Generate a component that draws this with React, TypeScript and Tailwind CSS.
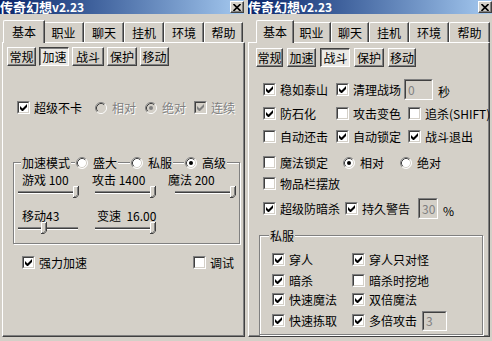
import React from "react";

type Kids = { children?: React.ReactNode };

function CheckBox({ checked, disabled }: { checked?: boolean; disabled?: boolean }) {
  return (
    <span className="relative block w-[13px] h-[13px] shrink-0 border border-t-[#808080] border-l-[#808080] border-r-white border-b-white">
      <span
        className={`absolute inset-0 border border-t-[#404040] border-l-[#404040] border-r-[#d4d0c8] border-b-[#d4d0c8] ${
          disabled ? "bg-[#d4d0c8]" : "bg-white"
        }`}
      />
      {checked && (
        <svg className="absolute left-[2px] top-[2px]" width="7" height="7" viewBox="0 0 7 7">
          <path d="M0 2L0 5L2 7L3 7L7 3L7 0L2.5 4.5Z" fill={disabled ? "#808080" : "#000"} />
        </svg>
      )}
    </span>
  );
}

function RadioBox({ checked, disabled }: { checked?: boolean; disabled?: boolean }) {
  return (
    <svg width="12" height="12" viewBox="0 0 12 12" className="block shrink-0">
      <circle cx="6" cy="6" r="5.2" fill={disabled ? "#d4d0c8" : "#fff"} />
      <path d="M2.11 9.89A5.5 5.5 0 0 1 9.89 2.11" stroke="#808080" fill="none" />
      <path d="M2.82 9.18A4.5 4.5 0 0 1 9.18 2.82" stroke="#404040" fill="none" />
      <path d="M9.89 2.11A5.5 5.5 0 0 1 2.11 9.89" stroke="#fff" fill="none" />
      <path d="M9.18 2.82A4.5 4.5 0 0 1 2.82 9.18" stroke="#d4d0c8" fill="none" />
      {checked && <circle cx="6" cy="6" r="2" fill={disabled ? "#808080" : "#000"} />}
    </svg>
  );
}

function Label({ children, disabled }: Kids & { disabled?: boolean }) {
  return (
    <span
      className={`text-[12px] leading-[13px] whitespace-nowrap ${
        disabled ? "text-[#808080] [text-shadow:1px_1px_0_#fff]" : "text-black"
      }`}
    >
      {children}
    </span>
  );
}

function CheckItem({
  label,
  checked,
  disabled,
  className = "",
}: {
  label: string;
  checked?: boolean;
  disabled?: boolean;
  className?: string;
}) {
  return (
    <div className={`flex items-center gap-[4px] shrink-0 ${className}`}>
      <CheckBox checked={checked} disabled={disabled} />
      <Label disabled={disabled}>{label}</Label>
    </div>
  );
}

function RadioItem({
  label,
  checked,
  disabled,
  className = "",
}: {
  label: string;
  checked?: boolean;
  disabled?: boolean;
  className?: string;
}) {
  return (
    <div className={`flex items-center gap-[5px] shrink-0 ${className}`}>
      <RadioBox checked={checked} disabled={disabled} />
      <Label disabled={disabled}>{label}</Label>
    </div>
  );
}

function Btn({ c, pressed, children }: Kids & { c: string; pressed?: boolean }) {
  return pressed ? (
    <div
      className={`h-[19px] ${c} flex items-center justify-center pt-[1px] pl-[1px] bg-[#eceae6] border border-t-[#404040] border-l-[#404040] border-r-white border-b-white shadow-[inset_1px_1px_0_#808080] text-[12px] leading-[12px]`}
    >
      {children}
    </div>
  ) : (
    <div
      className={`h-[19px] ${c} flex items-center justify-center bg-[#d4d0c8] border border-t-white border-l-white border-r-[#404040] border-b-[#404040] shadow-[inset_-1px_-1px_0_#808080] text-[12px] leading-[12px]`}
    >
      {children}
    </div>
  );
}

function Field({ value, c }: { value: string; c: string }) {
  return (
    <div className={`shrink-0 border border-t-[#808080] border-l-[#808080] border-r-white border-b-white ${c}`}>
      <div className="h-full flex items-center border border-t-[#404040] border-l-[#404040] border-r-[#d4d0c8] border-b-[#d4d0c8] bg-[#d4d0c8] text-[#808080] text-[12px] leading-[12px] pl-[2px]">
        {value}
      </div>
    </div>
  );
}

function Slider({ c, value, max }: { c: string; value: number; max: number }) {
  const trackW = 60;
  const left = Math.round((value / max) * (trackW - 4)) - 1;
  return (
    <div className={`relative h-[12px] shrink-0 ${c}`}>
      <div className="absolute left-0 right-0 top-[5px] h-[3px] border-t border-t-[#808080] border-b border-b-white bg-[#404040]" />
      <svg className="absolute top-0" style={{ left }} width="6" height="12" viewBox="0 0 6 12">
        <path d="M0 0H6V9L3 12H0Z" fill="#d4d0c8" />
        <path d="M0.5 11V0.5H5" stroke="#fff" fill="none" />
        <path d="M5.5 0V9.2L3 11.5H0" stroke="#404040" fill="none" />
        <path d="M4.5 1V8.8L2.6 10.5H1" stroke="#808080" fill="none" />
      </svg>
    </div>
  );
}

function Group({ c, legend, children }: Kids & { c: string; legend: React.ReactNode }) {
  return (
    <div className={`relative shrink-0 border border-[#808080] shadow-[inset_1px_1px_0_#fff,1px_1px_0_#fff] ${c}`}>
      <div className="absolute -top-[7px] left-[7px] h-[13px] flex items-center">{legend}</div>
      {children}
    </div>
  );
}

type TabDef = { label: string; c: string; selected?: boolean };

function Tab({ t }: { t: TabDef }) {
  if (t.selected) {
    return (
      <div
        className={`relative z-10 -mx-[2px] h-[23px] ${t.c} shrink-0 bg-[#d4d0c8] border-t border-l border-t-white border-l-white border-r border-r-[#404040] shadow-[inset_-1px_0_0_#808080] rounded-tl-[2px] flex items-center justify-center pb-[1px] text-[12px] leading-[12px]`}
      >
        {t.label}
      </div>
    );
  }
  return (
    <div
      className={`mt-[2px] h-[20px] ${t.c} shrink-0 bg-[#d4d0c8] border-t border-l border-t-white border-l-white border-r border-r-[#404040] shadow-[inset_-1px_0_0_#808080] rounded-tl-[2px] flex items-center justify-center text-[12px] leading-[12px]`}
    >
      {t.label}
    </div>
  );
}

function CloseBtn() {
  return (
    <div className="w-[14px] h-[12px] shrink-0 bg-[#d4d0c8] border border-t-white border-l-white border-r-[#404040] border-b-[#404040] shadow-[inset_-1px_-1px_0_#808080] flex items-center justify-center">
      <svg width="8" height="7" viewBox="0 0 8 7">
        <path d="M0.5 0L7.5 7M7.5 0L0.5 7" stroke="#000" strokeWidth="1.6" />
      </svg>
    </div>
  );
}

function Window({
  c,
  titleC,
  tabRowC,
  tabs,
  children,
}: Kids & { c: string; titleC: string; tabRowC: string; tabs: TabDef[] }) {
  return (
    <div className={`flex flex-col h-[341px] shrink-0 bg-[#d4d0c8] ${c}`}>
      <div
        className={`h-[14px] flex items-center justify-between bg-linear-to-r from-[#0a246a] to-[#a6caf0] ${titleC}`}
      >
        <span className="flex items-baseline text-white font-bold whitespace-nowrap">
          <span className="text-[13px] leading-[14px]">传奇幻想</span>
          <span className="text-[12px] leading-[14px]">v2.23</span>
        </span>
        <CloseBtn />
      </div>
      <div className="flex flex-col pt-[6px]">
        <div className={`flex h-[22px] ${tabRowC}`}>
          {tabs.map((t) => (
            <Tab key={t.label} t={t} />
          ))}
        </div>
        <div className="h-[295px] flex flex-col border-t border-l border-t-white border-l-white border-r border-b border-r-[#404040] border-b-[#404040] shadow-[inset_-1px_-1px_0_#808080]">
          {children}
        </div>
      </div>
    </div>
  );
}

const leftTabs: TabDef[] = [
  { label: "基本", c: "w-[42px]", selected: true },
  { label: "职业", c: "w-[41px]" },
  { label: "聊天", c: "w-[40px]" },
  { label: "挂机", c: "w-[40px]" },
  { label: "环境", c: "w-[40px]" },
  { label: "帮助", c: "w-[39px]" },
];

const rightTabs: TabDef[] = [
  { label: "基本", c: "w-[38px]", selected: true },
  { label: "职业", c: "w-[39px]" },
  { label: "聊天", c: "w-[38px]" },
  { label: "挂机", c: "w-[40px]" },
  { label: "环境", c: "w-[40px]" },
  { label: "帮助", c: "w-[41px]" },
];

function LeftContent() {
  return (
    <div className="flex flex-col">
      <div className="flex gap-[3px] mt-[4px] ml-[4px]">
        <Btn c="w-[29px]">常规</Btn>
        <Btn c="w-[30px]" pressed>
          加速
        </Btn>
        <Btn c="w-[32px]">战斗</Btn>
        <Btn c="w-[30px]">保护</Btn>
        <Btn c="w-[29px]">移动</Btn>
      </div>
      <div className="flex h-[13px] items-center mt-[35px] pl-[14px]">
        <CheckItem className="w-[78px]" checked label="超级不卡" />
        <RadioItem className="w-[50px]" disabled label="相对" />
        <RadioItem className="w-[49px]" disabled checked label="绝对" />
        <CheckItem disabled checked label="连续" />
      </div>
      <Group
        c="mt-[48px] ml-[10px] w-[227px] h-[82px]"
        legend={
          <>
            <span className="bg-[#d4d0c8] px-[1px] h-[13px] flex items-center">
              <Label>加速模式</Label>
            </span>
            <RadioItem className="bg-[#d4d0c8] ml-[4px] px-[1px] h-[13px]" label="盛大" />
            <RadioItem className="bg-[#d4d0c8] ml-[12px] px-[1px] h-[13px]" label="私服" />
            <RadioItem className="bg-[#d4d0c8] ml-[11px] px-[1px] h-[13px]" checked label="高级" />
          </>
        }
      >
        <div className="flex flex-col">
          <div className="flex h-[12px] items-center mt-[11px] pl-[8px] text-[12px] leading-[12px] whitespace-nowrap">
            <span className="w-[70px] shrink-0">游戏 100</span>
            <span className="w-[76px] shrink-0">攻击 1400</span>
            <span>魔法 200</span>
          </div>
          <div className="flex items-center pl-[4px]">
            <Slider c="w-[60px]" value={100} max={100} />
            <Slider c="w-[60px] ml-[17px]" value={1400} max={1400} />
            <Slider c="w-[60px] ml-[20px]" value={200} max={200} />
          </div>
          <div className="flex h-[12px] items-center mt-[12px] pl-[8px] text-[12px] leading-[12px] whitespace-nowrap">
            <span className="w-[75px] shrink-0">移动43</span>
            <span>变速&nbsp; 16.00</span>
          </div>
          <div className="flex items-center pl-[4px]">
            <Slider c="w-[60px]" value={43} max={100} />
            <Slider c="w-[60px] ml-[17px]" value={16} max={16} />
          </div>
        </div>
      </Group>
      <div className="flex h-[13px] items-center mt-[12px] pl-[19px]">
        <CheckItem className="w-[171px]" checked label="强力加速" />
        <CheckItem label="调试" />
      </div>
    </div>
  );
}

function RightContent() {
  return (
    <div className="flex flex-col">
      <div className="flex gap-[4px] mt-[5px] ml-[7px]">
        <Btn c="w-[27px]">常规</Btn>
        <Btn c="w-[29px]">加速</Btn>
        <Btn c="w-[30px]" pressed>
          战斗
        </Btn>
        <Btn c="w-[30px]">保护</Btn>
        <Btn c="w-[28px]">移动</Btn>
      </div>
      <div className="flex h-[13px] items-center mt-[16px] pl-[14px]">
        <CheckItem className="w-[73px]" checked label="稳如泰山" />
        <CheckItem className="w-[68px]" checked label="清理战场" />
        <Field c="w-[29px] h-[21px]" value="0" />
        <span className="ml-[5px]">
          <Label>秒</Label>
        </span>
      </div>
      <div className="flex h-[13px] items-center mt-[11px] pl-[14px]">
        <CheckItem className="w-[73px]" checked label="防石化" />
        <CheckItem className="w-[72px]" label="攻击变色" />
        <CheckItem label="追杀(SHIFT)" />
      </div>
      <div className="flex h-[13px] items-center mt-[10px] pl-[14px]">
        <CheckItem className="w-[73px]" label="自动还击" />
        <CheckItem className="w-[72px]" checked label="自动锁定" />
        <CheckItem checked label="战斗退出" />
      </div>
      <div className="flex h-[13px] items-center mt-[13px] pl-[14px]">
        <CheckItem className="w-[80px]" label="魔法锁定" />
        <RadioItem className="w-[57px]" checked label="相对" />
        <RadioItem label="绝对" />
      </div>
      <div className="flex h-[13px] items-center mt-[8px] pl-[14px]">
        <CheckItem label="物品栏摆放" />
      </div>
      <div className="flex h-[13px] items-center mt-[12px] pl-[14px]">
        <CheckItem className="w-[82px]" checked label="超级防暗杀" />
        <CheckItem className="w-[73px]" checked label="持久警告" />
        <Field c="w-[20px] h-[21px]" value="30" />
        <span className="ml-[5px]">
          <Label>%</Label>
        </span>
      </div>
      <Group
        c="mt-[20px] ml-[10px] w-[224px] h-[100px]"
        legend={
          <span className="bg-[#d4d0c8] ml-[2px] px-[1px] h-[13px] flex items-center">
            <Label>私服</Label>
          </span>
        }
      >
        <div className="flex flex-col pl-[12px]">
          <div className="flex h-[13px] items-center mt-[17px]">
            <CheckItem className="w-[80px]" checked label="穿人" />
            <CheckItem checked label="穿人只对怪" />
          </div>
          <div className="flex h-[13px] items-center mt-[8px]">
            <CheckItem className="w-[80px]" checked label="暗杀" />
            <CheckItem label="暗杀时挖地" />
          </div>
          <div className="flex h-[13px] items-center mt-[6px]">
            <CheckItem className="w-[80px]" checked label="快速魔法" />
            <CheckItem checked label="双倍魔法" />
          </div>
          <div className="flex h-[13px] items-center mt-[8px]">
            <CheckItem className="w-[80px]" checked label="快速拣取" />
            <CheckItem checked label="多倍攻击" />
            <Field c="w-[25px] h-[20px] ml-[5px]" value="3" />
          </div>
        </div>
      </Group>
    </div>
  );
}

export default function App() {
  return (
    <div className="flex w-[492px] h-[341px] overflow-hidden bg-[#d4d0c8] text-black font-['Noto_Sans_CJK_SC','Noto_Sans',sans-serif]">
      <Window c="w-[245px] pl-[2px]" titleC="-ml-[2px] mr-[1px]" tabRowC="pl-[3px]" tabs={leftTabs}>
        <LeftContent />
      </Window>
      <Window c="w-[247px] pl-[3px] pr-[2px]" titleC="-mr-[2px]" tabRowC="pl-[10px]" tabs={rightTabs}>
        <RightContent />
      </Window>
    </div>
  );
}
